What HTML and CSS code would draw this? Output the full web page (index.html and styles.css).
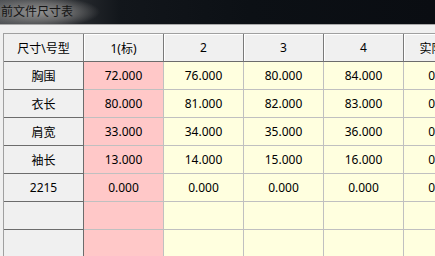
FILE: index.html
```html
<!DOCTYPE html>
<html lang="zh-CN">
<head>
<meta charset="utf-8">
<title>前文件尺寸表</title>
<link rel="stylesheet" href="styles.css">
</head>
<body>
<div class="window">
  <div class="titlebar"><span class="title">前文件尺寸表</span></div>
  <div class="content">
    <div class="grid">
      <div class="hcell corner">尺寸\号型</div>
      <div class="hcell">1(标)</div>
      <div class="hcell">2</div>
      <div class="hcell">3</div>
      <div class="hcell">4</div>
      <div class="hcell">实际尺寸</div>

      <div class="rhead">胸围</div>
      <div class="cell std">72.000</div>
      <div class="cell">76.000</div>
      <div class="cell">80.000</div>
      <div class="cell">84.000</div>
      <div class="cell">0.000</div>

      <div class="rhead">衣长</div>
      <div class="cell std">80.000</div>
      <div class="cell">81.000</div>
      <div class="cell">82.000</div>
      <div class="cell">83.000</div>
      <div class="cell">0.000</div>

      <div class="rhead">肩宽</div>
      <div class="cell std">33.000</div>
      <div class="cell">34.000</div>
      <div class="cell">35.000</div>
      <div class="cell">36.000</div>
      <div class="cell">0.000</div>

      <div class="rhead">袖长</div>
      <div class="cell std">13.000</div>
      <div class="cell">14.000</div>
      <div class="cell">15.000</div>
      <div class="cell">16.000</div>
      <div class="cell">0.000</div>

      <div class="rhead">2215</div>
      <div class="cell std">0.000</div>
      <div class="cell">0.000</div>
      <div class="cell">0.000</div>
      <div class="cell">0.000</div>
      <div class="cell">0.000</div>

      <div class="rhead"></div>
      <div class="cell std"></div>
      <div class="cell"></div>
      <div class="cell"></div>
      <div class="cell"></div>
      <div class="cell"></div>

      <div class="rhead"></div>
      <div class="cell std"></div>
      <div class="cell"></div>
      <div class="cell"></div>
      <div class="cell"></div>
      <div class="cell"></div>
    </div>
  </div>
</div>
</body>
</html>
```
FILE: styles.css
```css
html, body {
  margin: 0;
  padding: 0;
  width: 435px;
  height: 256px;
  overflow: hidden;
  background: #f0f0f0;
  font-family: "Noto Sans", "Noto Sans CJK SC", sans-serif;
  font-size: 12px;
  color: #000;
}

.window {
  width: 435px;
  height: 256px;
  overflow: hidden;
}

.titlebar {
  height: 24px;
  border-bottom: 1px solid #a9a9a9;
  display: flex;
  align-items: center;
  background:
    radial-gradient(ellipse 62px 16px at 38px 12px, rgba(150,150,150,0.95) 0%, rgba(120,120,120,0.75) 55%, rgba(60,62,66,0) 100%),
    linear-gradient(90deg, #4c4f53 0px, #2a2d31 70px, #12161b 120px, #0c1015 250px, #0a0d12 435px);
}

.title {
  padding-left: 1px;
  color: #151515;
  font-size: 12px;
  line-height: 14px;
  margin-top: -1px;
}

.content {
  padding: 8px 0 0 3px;
}

.grid {
  display: grid;
  grid-template-columns: repeat(6, 80px);
  grid-auto-rows: 28px;
  width: max-content;
  border-left: 1px solid #a0a0a0;
  border-top: 1px solid #a0a0a0;
}

.hcell,
.rhead,
.cell {
  box-sizing: border-box;
  display: flex;
  align-items: center;
  justify-content: center;
  white-space: nowrap;
  overflow: hidden;
}

.hcell {
  background: #f0f0f0;
  border-right: 1px solid #7a7a7a;
  border-bottom: 1px solid #6c6c6c;
  box-shadow: inset 1px 1px 0 #ffffff;
}

.hcell.corner {
  box-shadow: none;
}

.rhead {
  background: #f0f0f0;
  border-right: 1px solid #6c6c6c;
  border-bottom: 1px solid #6c6c6c;
}

.cell {
  background: #ffffdf;
  border-right: 1px solid #c0c0c0;
  border-bottom: 1px solid #c0c0c0;
}

.cell.std {
  background: #ffc8c8;
}
```
